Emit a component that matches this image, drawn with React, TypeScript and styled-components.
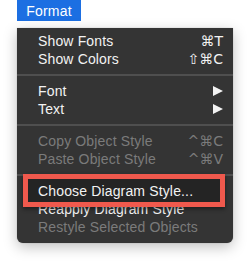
import * as React from 'react'
import styled, { createGlobalStyle } from 'styled-components'

const GlobalStyle = createGlobalStyle`
  html, body {
    margin: 0;
    padding: 0;
    background: #ffffff;
    font-family: "Liberation Sans", Arial, sans-serif;
  }
`

const Page = styled.div`
  width: 251px;
  height: 264px;
  padding-left: 17px;
  box-sizing: border-box;
  display: flex;
  flex-direction: column;
`

const MenuTitle = styled.div`
  width: 64px;
  height: 21px;
  background: #1c6fe2;
  color: #ffffff;
  font-size: 14px;
  letter-spacing: 0.2px;
  display: flex;
  align-items: center;
  justify-content: center;
`

const Menu = styled.div`
  margin-top: 7px;
  width: 216px;
  padding: 4px 0 7px;
  box-sizing: border-box;
  background: #343434;
  border-radius: 0 0 6px 6px;
  box-shadow: 0 4px 14px rgba(0, 0, 0, 0.25), 0 0 1px rgba(0, 0, 0, 0.4);
`

const Row = styled.div<{ disabled?: boolean; highlighted?: boolean }>`
  position: relative;
  z-index: ${({ highlighted }) => (highlighted ? 1 : 'auto')};
  height: 18px;
  padding: 0 10px 0 21px;
  display: flex;
  align-items: center;
  justify-content: space-between;
  font-size: 14px;
  letter-spacing: 0.15px;
  color: ${({ disabled }) => (disabled ? '#7b7b7b' : '#f2f2f2')};

  &::before {
    content: '';
    display: ${({ highlighted }) => (highlighted ? 'block' : 'none')};
    position: absolute;
    z-index: -1;
    left: 6px;
    right: 8px;
    top: -8px;
    bottom: -7px;
    border: 5px solid #f0594d;
    background: #242424;
    box-shadow: 0 2px 4px rgba(0, 0, 0, 0.45);
  }
`

const Shortcut = styled.span`
  font-family: "DejaVu Sans", "Liberation Sans", sans-serif;
  font-size: 14px;
  letter-spacing: 0;
`

const Separator = styled.div`
  height: 14px;
  display: flex;
  align-items: center;

  &::after {
    content: '';
    flex: 1;
    height: 2px;
    background: #4f4f4f;
  }
`

const Arrow = () => (
  <svg width="10" height="10" viewBox="0 0 10 10">
    <polygon points="0,0 10,5 0,10" fill="#f2f2f2" />
  </svg>
)

export default function App() {
  return (
    <Page>
      <GlobalStyle />
      <MenuTitle>Format</MenuTitle>
      <Menu>
        <Row>
          <span>Show Fonts</span>
          <Shortcut>⌘T</Shortcut>
        </Row>
        <Row>
          <span>Show Colors</span>
          <Shortcut>⇧⌘C</Shortcut>
        </Row>
        <Separator />
        <Row>
          <span>Font</span>
          <Arrow />
        </Row>
        <Row>
          <span>Text</span>
          <Arrow />
        </Row>
        <Separator />
        <Row disabled>
          <span>Copy Object Style</span>
          <Shortcut>^⌘C</Shortcut>
        </Row>
        <Row disabled>
          <span>Paste Object Style</span>
          <Shortcut>^⌘V</Shortcut>
        </Row>
        <Separator />
        <Row highlighted>
          <span>Choose Diagram Style...</span>
        </Row>
        <Row>
          <span>Reapply Diagram Style</span>
        </Row>
        <Row disabled>
          <span>Restyle Selected Objects</span>
        </Row>
      </Menu>
    </Page>
  )
}
